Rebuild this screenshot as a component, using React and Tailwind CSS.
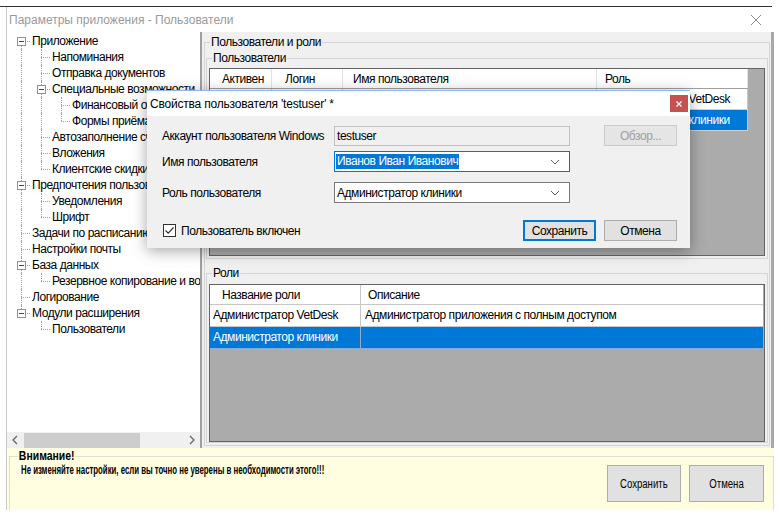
import React from "react";

const UI = "font-['Liberation_Sans',Arial,sans-serif]";

const tree = [
  ["Приложение", 0, true],
  ["Напоминания", 1],
  ["Отправка документов", 1],
  ["Специальные возможности", 1, true],
  ["Финансовый отчёт", 2],
  ["Формы приёма", 2],
  ["Автозаполнение счетов", 1],
  ["Вложения", 1],
  ["Клиентские скидки", 1],
  ["Предпочтения пользователя", 0, true],
  ["Уведомления", 1],
  ["Шрифт", 1],
  ["Задачи по расписанию", 0],
  ["Настройки почты", 0],
  ["База данных", 0, true],
  ["Резервное копирование и восстановление", 1],
  ["Логирование", 0],
  ["Модули расширения", 0, true],
  ["Пользователи", 1],
];

function hasNext(i) {
  const lvl = tree[i][1];
  for (let j = i + 1; j < tree.length; j++) {
    if (tree[j][1] < lvl) return false;
    if (tree[j][1] === lvl) return true;
  }
  return false;
}

function TreeRow({ i }) {
  const [text, lvl, box] = tree[i];
  const cells = [];
  for (let c = 0; c < lvl; c++) {
    let k = i - 1;
    while (k >= 0 && tree[k][1] !== c) k--;
    cells.push(
      <div key={c} className="relative w-[20px] h-full shrink-0">
        {hasNext(k) && (
          <div className="absolute left-[10px] top-0 bottom-0 border-l border-dotted border-[#a0a0a0]" />
        )}
      </div>
    );
  }
  return (
    <div className="flex h-[16px] items-center">
      {cells}
      <div className="relative w-[20px] h-full shrink-0">
        {i > 0 && (
          <div className="absolute left-[10px] top-0 h-[8px] border-l border-dotted border-[#a0a0a0]" />
        )}
        {hasNext(i) && (
          <div className="absolute left-[10px] top-[8px] bottom-0 border-l border-dotted border-[#a0a0a0]" />
        )}
        <div className="absolute left-[10px] top-[8px] w-[9px] border-t border-dotted border-[#a0a0a0]" />
        {box && (
          <div className="absolute left-[6px] top-[4px] w-[9px] h-[9px] border border-[#919191] bg-white flex items-center justify-center">
            <div className="w-[5px] h-px bg-[#444]" />
          </div>
        )}
      </div>
      <span className="pl-[1px] whitespace-nowrap text-[12px] leading-[16px] text-black">
        {text}
      </span>
    </div>
  );
}

function GroupBox({ label, className, children }) {
  return (
    <div className={"relative border border-[#d5d5d5] " + className}>
      <span className="absolute -top-[8px] left-[5px] bg-[#f0f0f0] px-[1px] text-[12px] leading-[14px] whitespace-nowrap">
        {label}
      </span>
      {children}
    </div>
  );
}

function Chevron() {
  return (
    <svg width="10" height="6" viewBox="0 0 10 6" className="shrink-0">
      <polyline points="1,1 5,5 9,1" fill="none" stroke="#606060" strokeWidth="1" />
    </svg>
  );
}

const userCols = [
  { w: "w-[62px]", h: "Активен", p: "pl-[12px]" },
  { w: "w-[71px]", h: "Логин", p: "pl-[13px]" },
  { w: "w-[254px]", h: "Имя пользователя", p: "pl-[10px]" },
  { w: "w-[151px]", h: "Роль", p: "pl-[8px]" },
];

const userRows = [
  ["", "admin", "Администратор", "Администратор VetDesk"],
  ["", "testuser", "Иванов Иван Иванович", "Администратор клиники"],
];

export default function App() {
  return (
    <div className={"relative w-[780px] h-[515px] bg-white overflow-hidden text-black tracking-[-0.45px] " + UI}>
      {/* top strip */}
      <div className="h-[7px] w-[772px] border-b border-[#333]" />

      <div className="ml-[6px] w-[768px]">
        {/* title bar */}
        <div className="h-[25px] bg-white border-l border-[#c8c8c8] flex items-center justify-between pl-[2px] pr-[12px]">
          <span className="text-[12px] tracking-normal text-[#9a9a9a]">Параметры приложения - Пользователи</span>
          <svg width="12" height="12" viewBox="0 0 12 12">
            <path d="M1 1 L11 11 M11 1 L1 11" stroke="#8a8a8a" strokeWidth="1" />
          </svg>
        </div>

        {/* body */}
        <div className="flex h-[416px] border-l border-[#c8c8c8]">
          {/* tree */}
          <div className="w-[195px] shrink-0 bg-white border-r-2 border-[#a0a0a0] flex flex-col">
            <div className="flex-1 overflow-hidden pl-[4px] pt-[1px]">
              {tree.map((_, i) => (
                <TreeRow key={i} i={i} />
              ))}
            </div>
            <div className="h-[16px] bg-[#f0f0f0] flex items-center">
              <svg width="17" height="16" viewBox="0 0 17 16" className="shrink-0">
                <polyline points="10,4 6,8 10,12" fill="none" stroke="#606060" strokeWidth="1.2" />
              </svg>
              <div className="w-[116px] h-[15px] bg-[#cdcdcd]" />
              <div className="flex-1" />
              <svg width="17" height="16" viewBox="0 0 17 16" className="shrink-0">
                <polyline points="7,4 11,8 7,12" fill="none" stroke="#606060" strokeWidth="1.2" />
              </svg>
            </div>
          </div>

          {/* right panel */}
          <div className="flex-1 bg-[#f0f0f0] border-r-[3px] border-[#a8a8a8] pl-[2px] pr-[1px] pt-[10px]">
            <GroupBox label="Пользователи и роли" className="h-[404px] pl-[1px] pr-[1px] pt-[15px]">
              <GroupBox label="Пользователи" className="h-[201px] pl-[2px] pr-[2px] pt-[9px]">
                <div className="h-[188px] border border-[#646464] bg-[#ababab] overflow-hidden">
                  <div className="flex h-[20px] bg-white border-b border-[#a0a0a0] w-[538px]">
                    {userCols.map((c, i) => (
                      <div key={i} className={c.w + " " + c.p + " shrink-0 border-r border-[#e3e3e3] text-[12px] leading-[20px]"}>
                        {c.h}
                      </div>
                    ))}
                  </div>
                  {userRows.map((r, ri) => (
                    <div key={ri} className={"flex h-[21px] w-[538px] border-b border-[#d0d0d0] " + (ri === 1 ? "bg-[#0078d7] text-white" : "bg-white")}>
                      {r.map((v, ci) => (
                        <div key={ci} className={userCols[ci].w + " shrink-0 pl-[8px] border-r border-[#c8c8c8] text-[12px] leading-[20px] whitespace-nowrap overflow-hidden"}>
                          {v}
                        </div>
                      ))}
                    </div>
                  ))}
                </div>
              </GroupBox>

              <GroupBox label="Роли" className="mt-[14px] h-[170px] pl-[2px] pr-[2px] pt-[10px]">
                <div className="h-[158px] border border-[#646464] bg-[#ababab] overflow-hidden">
                  <div className="flex h-[20px] bg-white border-b border-[#c8c8c8] mr-[1px]">
                    <div className="w-[151px] shrink-0 pl-[12px] border-r border-[#c8c8c8] text-[12px] leading-[20px]">Название роли</div>
                    <div className="flex-1 pl-[7px] text-[12px] leading-[20px]">Описание</div>
                  </div>
                  <div className="flex h-[22px] bg-white border-b border-[#c8c8c8] mr-[1px]">
                    <div className="w-[151px] shrink-0 pl-[3px] border-r border-[#c8c8c8] text-[12px] leading-[21px] whitespace-nowrap overflow-hidden">Администратор VetDesk</div>
                    <div className="flex-1 pl-[4px] text-[12px] leading-[21px] whitespace-nowrap">Администратор приложения с полным доступом</div>
                  </div>
                  <div className="flex h-[22px] bg-[#0078d7] text-white border-b border-[#8aaed0] mr-[1px]">
                    <div className="w-[151px] shrink-0 pl-[3px] border-r border-[#8aaed0] text-[12px] leading-[21px] whitespace-nowrap">Администратор клиники</div>
                    <div className="flex-1" />
                  </div>
                </div>
              </GroupBox>
            </GroupBox>
          </div>
        </div>

        {/* warning area */}
        <div className="h-[62px] bg-[#fffee1] border-l border-[#c8c8c8] overflow-hidden pl-[2px] pt-[8px] tracking-normal">
          <div className="relative h-[80px] border border-[#e0e0d0] flex items-start">
            <span className="absolute -top-[8px] left-[8px] bg-[#fffee1] px-[1px] text-[12px] leading-[14px] font-bold origin-left scale-x-[0.87]">
              Внимание!
            </span>
            <div className="flex pl-[11px] pt-[6px] w-[330px] shrink-0 whitespace-nowrap text-[12px] leading-[14px]">
              <span className="inline-block font-bold origin-left scale-x-[0.65]">
                Не изменяйте настройки, если вы точно не уверены в необходимости этого!!!
              </span>
            </div>
            <div className="ml-auto flex gap-[8px] pt-[8px] pr-[9px]">
              <div className="w-[74px] h-[37px] bg-[#e1e1e1] border border-[#adadad] flex items-center justify-center text-[12px]">
                <span className="inline-block scale-x-[0.8]">Сохранить</span>
              </div>
              <div className="w-[75px] h-[37px] bg-[#e1e1e1] border border-[#adadad] flex items-center justify-center text-[12px]">
                <span className="inline-block scale-x-[0.8]">Отмена</span>
              </div>
            </div>
          </div>
        </div>
      </div>

      {/* modal dialog */}
      <div className="absolute left-[147px] top-[90px] w-[543px] h-[158px] bg-[#f0f0f0] border-t border-[#8bbbe6] shadow-[0_3px_14px_rgba(0,0,0,0.35)] flex flex-col">
        <div className="h-[25px] bg-white flex items-center justify-between pl-[3px] pr-[2px]">
          <span className="text-[12px] tracking-[-0.2px]">Свойства пользователя 'testuser' *</span>
          <div className="w-[18px] h-[17px] bg-[#c75050] flex items-center justify-center">
            <svg width="6" height="6" viewBox="0 0 6 6">
              <path d="M0.5 0.5 L5.5 5.5 M5.5 0.5 L0.5 5.5" stroke="white" strokeWidth="1.2" />
            </svg>
          </div>
        </div>
        <div className="flex-1 pl-[15px] pr-[13px] pt-[9px] text-[12px]">
          <div className="flex items-center h-[21px]">
            <div className="w-[172px] shrink-0 whitespace-nowrap">Аккаунт пользователя Windows</div>
            <div className="w-[236px] h-[20px] border border-[#c0c0c0] bg-[#f0f0f0] pl-[2px] leading-[18px]">testuser</div>
            <div className="ml-[34px] w-[73px] h-[21px] border border-[#cccccc] bg-[#e5e5e5] text-[#a0a0a0] flex items-center justify-center">
              Обзор...
            </div>
          </div>
          <div className="flex items-center h-[21px] mt-[5px]">
            <div className="w-[172px] shrink-0">Имя пользователя</div>
            <div className="w-[236px] h-[21px] border border-[#0078d7] bg-white flex items-center pl-[1px] pr-[9px]">
              <span className="bg-[#0078d7] text-white leading-[15px] px-[1px]">Иванов Иван Иванович</span>
              <div className="flex-1" />
              <Chevron />
            </div>
          </div>
          <div className="flex items-center h-[21px] mt-[10px]">
            <div className="w-[172px] shrink-0">Роль пользователя</div>
            <div className="w-[236px] h-[21px] border border-[#7a7a7a] bg-white flex items-center pl-[2px] pr-[9px]">
              <span>Администратор клиники</span>
              <div className="flex-1" />
              <Chevron />
            </div>
          </div>
          <div className="flex items-center h-[21px] mt-[17px]">
            <div className="ml-[1px] w-[13px] h-[13px] border border-[#333] bg-white flex items-center justify-center">
              <svg width="11" height="11" viewBox="0 0 11 11">
                <polyline points="1.5,5.5 4.2,8.2 9.5,2.5" fill="none" stroke="#333" strokeWidth="1.2" />
              </svg>
            </div>
            <span className="ml-[5px]">Пользователь включен</span>
            <div className="ml-auto w-[73px] h-[21px] border-2 border-[#0078d7] bg-[#e1e1e1] flex items-center justify-center">
              Сохранить
            </div>
            <div className="ml-[8px] w-[73px] h-[21px] border border-[#adadad] bg-[#e1e1e1] flex items-center justify-center">
              Отмена
            </div>
          </div>
        </div>
      </div>
    </div>
  );
}
